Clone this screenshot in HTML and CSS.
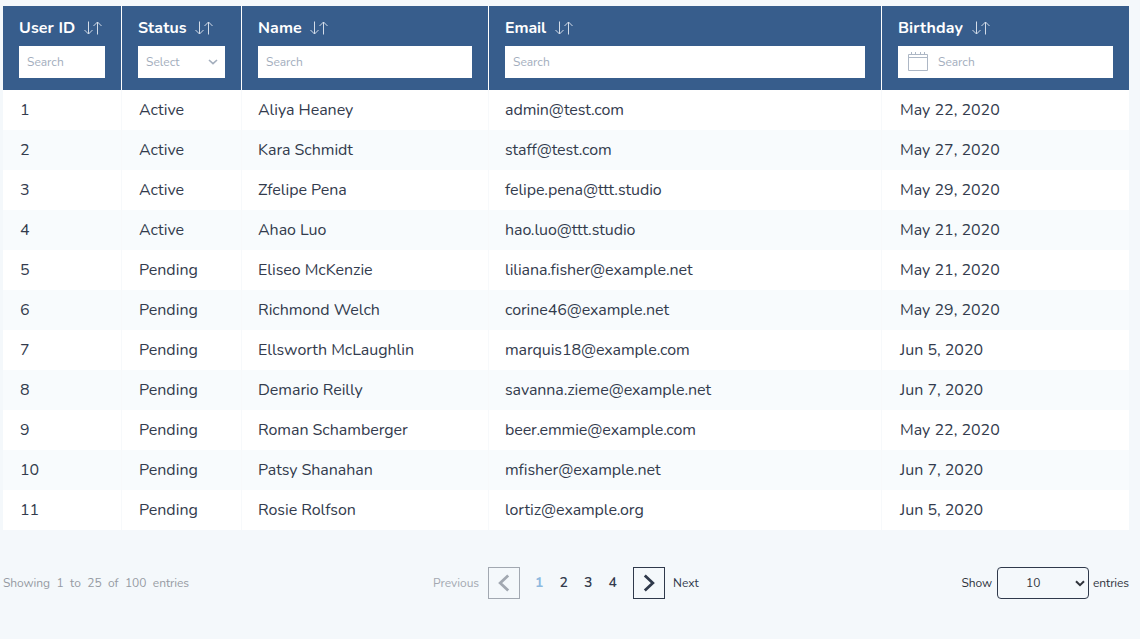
FILE: index.html
```html
<!DOCTYPE html>
<html lang="en">
<head>
<meta charset="utf-8">
<title>Users</title>
<link rel="stylesheet" href="styles.css">
</head>
<body>
<svg width="0" height="0" class="sprite">
  <symbol id="sort" viewBox="0 0 18 14"><path d="M4.5 0.5V13M0.5 9L4.5 13L8.5 9M13.5 13.5V1M9.5 5L13.5 1L17.5 5"/></symbol>
</svg>
<main class="page">
  <section class="table">
    <div class="row head">
      <div class="th"><div class="title">User ID<svg class="sort"><use href="#sort"/></svg></div><div class="field">Search</div></div>
      <div class="th"><div class="title">Status<svg class="sort"><use href="#sort"/></svg></div><div class="field select">Select<svg width="10" height="6" viewBox="0 0 10 6"><path d="M1 1L5 4.7L9 1"/></svg></div></div>
      <div class="th"><div class="title">Name<svg class="sort"><use href="#sort"/></svg></div><div class="field">Search</div></div>
      <div class="th"><div class="title email">Email<svg class="sort"><use href="#sort"/></svg></div><div class="field">Search</div></div>
      <div class="th"><div class="title">Birthday<svg class="sort"><use href="#sort"/></svg></div><div class="field date"><svg width="20" height="20" viewBox="0 0 20 20"><path d="M.5 2.5H19.5V18.5H.5ZM.5 5.5H19.5M3.5 0V3M7.5 0V3M12.5 0V3M16.5 0V3"/></svg>Search</div></div>
    </div>
    <div class="row"><div>1</div><div>Active</div><div>Aliya Heaney</div><div>admin@test.com</div><div>May 22, 2020</div></div>
    <div class="row"><div>2</div><div>Active</div><div>Kara Schmidt</div><div>staff@test.com</div><div>May 27, 2020</div></div>
    <div class="row"><div>3</div><div>Active</div><div>Zfelipe Pena</div><div>felipe.pena@ttt.studio</div><div>May 29, 2020</div></div>
    <div class="row"><div>4</div><div>Active</div><div>Ahao Luo</div><div>hao.luo@ttt.studio</div><div>May 21, 2020</div></div>
    <div class="row"><div>5</div><div>Pending</div><div>Eliseo McKenzie</div><div>liliana.fisher@example.net</div><div>May 21, 2020</div></div>
    <div class="row"><div>6</div><div>Pending</div><div>Richmond Welch</div><div>corine46@example.net</div><div>May 29, 2020</div></div>
    <div class="row"><div>7</div><div>Pending</div><div>Ellsworth McLaughlin</div><div>marquis18@example.com</div><div>Jun 5, 2020</div></div>
    <div class="row"><div>8</div><div>Pending</div><div>Demario Reilly</div><div>savanna.zieme@example.net</div><div>Jun 7, 2020</div></div>
    <div class="row"><div>9</div><div>Pending</div><div>Roman Schamberger</div><div>beer.emmie@example.com</div><div>May 22, 2020</div></div>
    <div class="row"><div>10</div><div>Pending</div><div>Patsy Shanahan</div><div>mfisher@example.net</div><div>Jun 7, 2020</div></div>
    <div class="row"><div>11</div><div>Pending</div><div>Rosie Rolfson</div><div>lortiz@example.org</div><div>Jun 5, 2020</div></div>
  </section>
  <footer class="footer">
    <div class="info">Showing 1 to 25 of 100 entries</div>
    <nav class="pager">
      <span class="prev">Previous</span>
      <span class="arrow off"><svg width="12" height="18" viewBox="0 0 12 18"><path d="M10.2 1.5L2.2 9L10.2 16.5"/></svg></span>
      <span class="nums"><b class="on">1</b><b>2</b><b>3</b><b>4</b></span>
      <span class="arrow"><svg width="12" height="18" viewBox="0 0 12 18"><path d="M1.8 1.5L9.8 9L1.8 16.5"/></svg></span>
      <span class="next">Next</span>
    </nav>
    <div class="show">Show<span class="count">10<svg width="10" height="7" viewBox="0 0 10 7"><path d="M1 1.2L5 5.2L9 1.2"/></svg></span>entries</div>
  </footer>
</main>
</body>
</html>
```
FILE: styles.css
```css
* { box-sizing: border-box; }
body {
  margin: 0;
  background: #f4f8fb;
  color: #333b4d;
  font-family: Nunito, Lato, "Open Sans", sans-serif;
  font-size: 16px;
}
.page { height: 639px; padding: 6px 11px 0 3px; overflow: hidden; }
.sprite { display: block; }
.row {
  display: grid;
  grid-template-columns: 119px 120px 247px 393px 247px;
  height: 40px;
  line-height: 40px;
  background: #f8fbfd;
  white-space: nowrap;
}
.row:nth-child(even) { background: #fff; }
.row > div { padding-left: 16px; border-right: 1px solid #f7f9fb; }
.row > div:nth-child(1), .row > div:nth-child(2) { padding-left: 17px; }
.row > div:nth-child(3) { letter-spacing: -.04px; }
.row > div:nth-child(4) { letter-spacing: -.09px; }
.row > div:nth-child(5) { padding-left: 18px; }
.row > div:last-child { border-right: 0; }
.row.head { height: 84px; background: #375d8c; line-height: 20px; }
.row > div.th, .row > div.th:nth-child(n) { padding: 12px 16px 0; border-color: #fff; letter-spacing: 0; }
.title { display: flex; height: 20px; color: #fff; font-weight: 700; letter-spacing: .1px; }
.title.email { letter-spacing: -.1px; }
.sort {
  width: 18px;
  height: 14px;
  margin: 3px 0 0 8.5px;
  fill: none;
  stroke: #d3dce8;
}
.field {
  display: flex;
  align-items: center;
  height: 32px;
  margin-top: 8px;
  padding: 0 8px;
  background: #fff;
  color: #a3aebd;
  font-size: 12px;
}
.field svg { fill: none; stroke: #adb7c5; }
.select { justify-content: space-between; padding-right: 7px; }
.select svg { stroke: #a3aebd; stroke-width: 1.6; }
.date { padding-left: 10px; gap: 10px; }
.footer {
  display: grid;
  grid-template-columns: 430px 1fr 170px;
  align-items: center;
  height: 32px;
  margin-top: 37px;
  font-size: 12px;
}
.info { color: #969ba3; word-spacing: 3.5px; letter-spacing: -.08px; }
.pager { display: flex; align-items: center; }
.prev { width: 55px; color: #a3a8b1; }
.arrow {
  display: flex;
  align-items: center;
  justify-content: center;
  width: 32px;
  height: 32px;
  border: 1px solid #2f394b;
}
.arrow svg { fill: none; stroke: #2f394b; stroke-width: 2.8; }
.arrow.off { border-color: #a2a8b1; }
.arrow.off svg { stroke: #a2a8b1; }
.nums { display: flex; width: 113px; padding: 0 0 2px 7px; font-size: 14px; }
.nums b { width: 24.5px; text-align: center; font-weight: 600; }
.nums .on { color: #8db9df; font-weight: 700; }
.next { margin-left: 8px; }
.show {
  display: flex;
  align-items: center;
  justify-content: flex-end;
  color: #30343d;
  letter-spacing: -.1px;
}
.count {
  display: flex;
  align-items: center;
  justify-content: space-between;
  width: 92px;
  height: 32px;
  margin: 0 4px 0 5px;
  padding: 0 3px 0 28px;
  border: 1px solid #2f394b;
  border-radius: 4px;
}
.count svg { fill: none; stroke: #2f333b; stroke-width: 2; }
```
